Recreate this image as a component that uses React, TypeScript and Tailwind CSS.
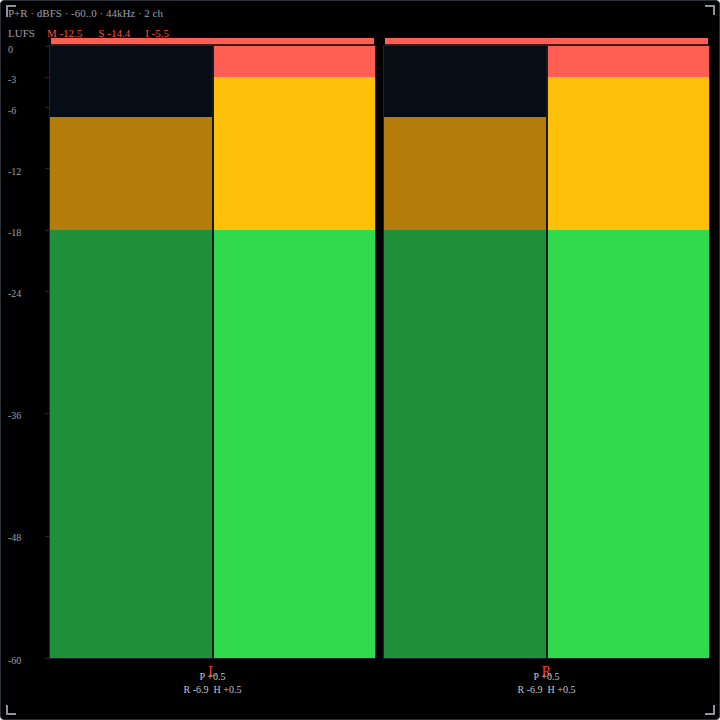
import React from "react";

const scale = [
  { l: "0", top: 6, tick: 8 },
  { l: "-3", top: 36, tick: 39 },
  { l: "-6", top: 67, tick: 69 },
  { l: "-12", top: 128, tick: 130 },
  { l: "-18", top: 189, tick: 192 },
  { l: "-24", top: 250, tick: 253 },
  { l: "-36", top: 372, tick: 375 },
  { l: "-48", top: 494, tick: 498 },
  { l: "-60", top: 617, tick: 620 },
];

function Meter() {
  return (
    <div className="w-[327px] flex flex-col">
      <div className="mx-[2px] h-[7px] bg-[#ff5f52] border-b border-[#4a1a16]" />
      <div className="h-[614px] border border-[#1b2430] flex bg-[#0e141c]">
        <div className="w-[162px] flex flex-col">
          <div className="h-[71px] bg-[#070d17]" />
          <div className="h-[113px] bg-[#b47c0a]" />
          <div className="flex-1 bg-[#21903a]" />
        </div>
        <div className="w-[2px] bg-[#141a22]" />
        <div className="flex-1 flex flex-col">
          <div className="h-[31px] bg-[#ff5f52]" />
          <div className="h-[153px] bg-[#ffc00a]" />
          <div className="flex-1 bg-[#30da4c]" />
        </div>
      </div>
    </div>
  );
}

function MeterLabel({ ch }: { ch: string }) {
  return (
    <div className="w-[327px] relative flex flex-col items-center pt-[12px] text-[10px] text-[#c3c7cc]">
      <div className="absolute top-[6px] left-1/2 -translate-x-1/2 text-[14px] leading-[14px] text-[#ff3b30]">
        {ch}
      </div>
      <div className="leading-[12px] relative">P +0.5</div>
      <div className="leading-[13px] whitespace-pre relative">R -6.9  H +0.5</div>
    </div>
  );
}

export default function App() {
  return (
    <div
      className="w-[720px] h-[720px] bg-black relative border border-[#2b3038] rounded-[4px] overflow-hidden"
      style={{ fontFamily: '"Liberation Serif", "Times New Roman", serif' }}
    >
      {/* corner brackets */}
      <div className="absolute left-[5px] top-[4px] w-[10px] h-[12px] border-l-2 border-t-2 border-[#8d939b]" />
      <div className="absolute right-[4px] top-[4px] w-[10px] h-[10px] border-r-2 border-t-2 border-[#8d939b]" />
      <div className="absolute left-[5px] bottom-[4px] w-[10px] h-[10px] border-l-2 border-b-2 border-[#8d939b]" />
      <div className="absolute right-[4px] bottom-[4px] w-[10px] h-[10px] border-r-2 border-b-2 border-[#8d939b]" />

      <div className="h-[20px] pt-[5px] pl-[7px] text-[11px] leading-[15px] text-[#9aa0a8] whitespace-pre">
        P+R · dBFS · -60..0 · 44kHz · 2 ch
      </div>
      <div className="h-[17px] flex items-end pl-[7px] text-[11px] leading-[10px]">
        <span className="text-[#9aa0a8]">LUFS</span>
        <span className="ml-[12px] text-[#ff4a3d]">M -12.5</span>
        <span className="ml-[16px] text-[#ff4a3d]">S -14.4</span>
        <span className="ml-[15px] text-[#ff4a3d]">I -5.5</span>
      </div>

      <div className="flex">
        <div className="w-[48px] relative text-[10px] leading-[12px] text-[#9aa0a8]">
          {scale.map((s) => (
            <React.Fragment key={s.l}>
              <div className="absolute left-[7px]" style={{ top: s.top }}>
                {s.l}
              </div>
              <div
                className="absolute right-0 w-[4px] h-px bg-[#1f2935]"
                style={{ top: s.tick }}
              />
            </React.Fragment>
          ))}
        </div>
        <div className="flex gap-[7px]">
          <Meter />
          <Meter />
        </div>
      </div>

      <div className="flex pl-[48px] gap-[7px]">
        <MeterLabel ch="L" />
        <MeterLabel ch="R" />
      </div>
    </div>
  );
}
